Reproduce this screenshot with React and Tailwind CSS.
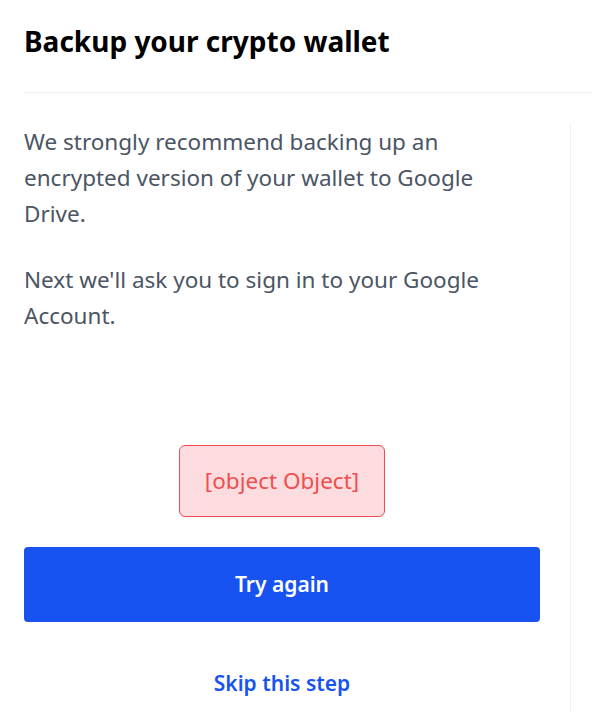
export default function App() {
  return (
    <div className="w-[592px] h-[728px] bg-white overflow-hidden" style={{ fontFamily: '"Noto Sans", "Open Sans", sans-serif' }}>
      {/* Header */}
      <div className="ml-6 pt-[21px] pb-[31px] border-b border-[#efefef]">
        <h1 className="text-[28px] leading-[40px] font-bold text-black">Backup your crypto wallet</h1>
      </div>

      <div className="flex mt-[30px]">
        <div className="w-[571px] h-[589px] border-r border-[#efefef] pl-6 pr-[30px] flex flex-col">
          <p className="max-w-[500px] text-[22.5px] leading-[36px] text-[#4b5563] mt-[1px]">
            We strongly recommend backing up an encrypted version of your wallet to Google Drive.
          </p>
          <p className="max-w-[500px] text-[22.5px] leading-[36px] text-[#4b5563] mt-[30px]">
            Next we'll ask you to sign in to your Google Account.
          </p>

          {/* Error */}
          <div className="flex justify-center mt-[111px]">
            <div className="bg-[#fddcdf] border border-[#f04d4d] rounded-[6px] px-[25px] h-[72px] flex items-center text-[22.5px] text-[#ef4f4f]">
              [object Object]
            </div>
          </div>

          <button className="mt-[30px] h-[75px] w-full bg-[#1853f1] rounded-[4px] text-white text-[21px] font-semibold">
            Try again
          </button>

          <button className="mt-[43px] h-[36px] leading-[36px] text-[21px] font-semibold text-[#1853f1]">
            Skip this step
          </button>
        </div>
      </div>
    </div>
  );
}
